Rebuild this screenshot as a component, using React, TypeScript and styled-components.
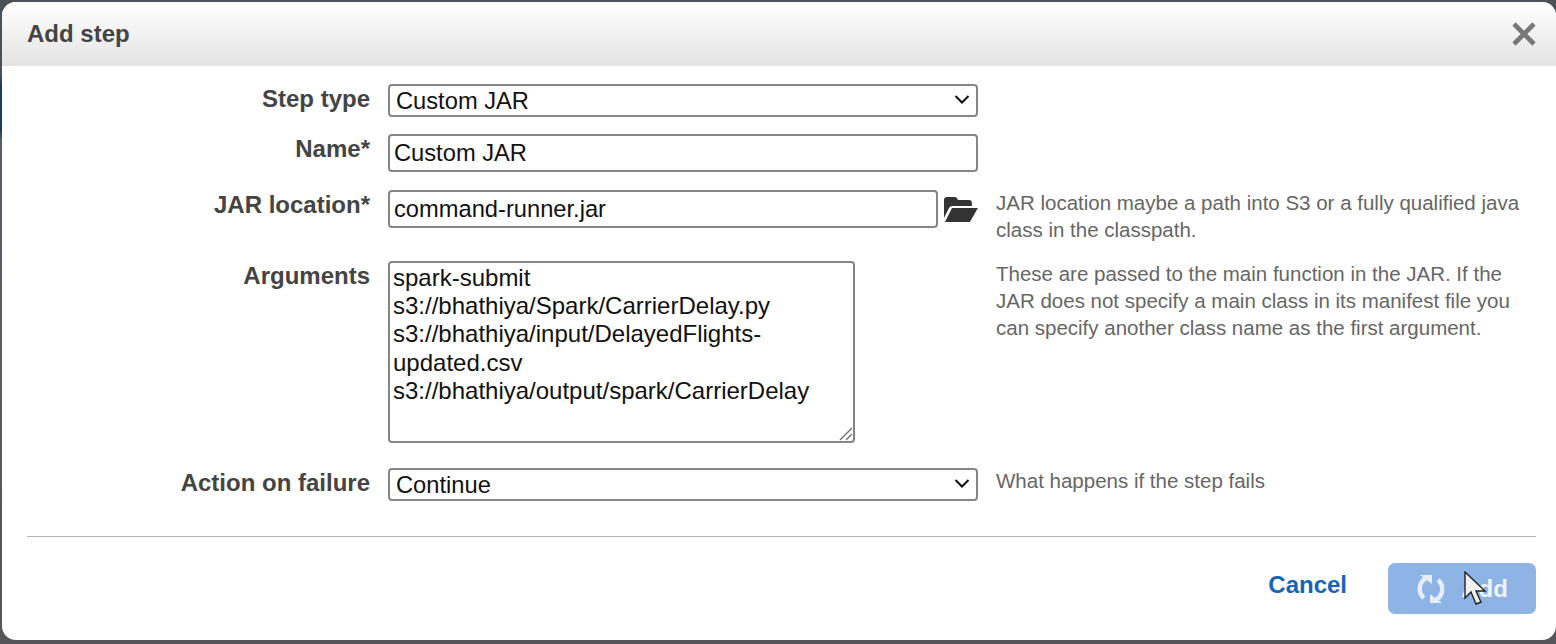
import React from "react";
import styled, { createGlobalStyle } from "styled-components";

const Global = createGlobalStyle`
  html, body { margin: 0; padding: 0; width: 1556px; height: 644px; overflow: hidden; background: #56595c; }
  body { font-family: "Liberation Sans", Arial, sans-serif; }
`;

const Backdrop = styled.div`
  width: 1556px;
  height: 644px;
  box-sizing: border-box;
  padding: 2px 0 4px 2px;
  background: linear-gradient(180deg, #4a5157 0, #4a5157 76px, #1e3a5c 84px, #1e3a5c 130px, #5a6066 140px, #565659 100%);
`;

const Modal = styled.div`
  height: 638px;
  box-sizing: border-box;
  background: #fff;
  border-radius: 14px;
  overflow: hidden;
  position: relative;
  display: flex;
  flex-direction: column;
`;

const Header = styled.header`
  height: 64px;
  flex: none;
  box-sizing: border-box;
  padding: 0 20px 0 25px;
  display: flex;
  align-items: center;
  justify-content: space-between;
  background: linear-gradient(180deg, #ffffff 0%, #e4e4e4 100%);
`;

const Title = styled.h2`
  margin: 0;
  font-size: 24px;
  line-height: 62px;
  font-weight: 700;
  color: #444;
`;

const Close = styled.svg`
  width: 24px;
  height: 24px;
  display: block;
`;

const Form = styled.div`
  padding: 18px 20px 0 0;
  display: flex;
  flex-direction: column;
`;

const Row = styled.div<{ $height: number }>`
  display: grid;
  grid-template-columns: 368px 590px 1fr;
  column-gap: 18px;
  height: ${(p) => p.$height}px;
  align-items: start;
`;

const Label = styled.label`
  text-align: right;
  font-size: 24px;
  line-height: 30px;
  font-weight: 700;
  color: #444;
`;

const SelectBox = styled.div`
  position: relative;
  width: 590px;
  height: 33px;
`;

const Select = styled.select`
  width: 100%;
  height: 100%;
  box-sizing: border-box;
  appearance: none;
  border: 2px solid #858585;
  border-radius: 4px;
  background: #fff;
  padding: 0 6px;
  font-family: inherit;
  font-size: 23.7px;
  color: #111;
  display: block;
`;

const Chevron = styled.svg`
  position: absolute;
  right: 8px;
  top: 10px;
  width: 16px;
  height: 11px;
  pointer-events: none;
`;

const Input = styled.input<{ $width: number }>`
  width: ${(p) => p.$width}px;
  height: 38px;
  box-sizing: border-box;
  border: 2px solid #858585;
  border-radius: 4px;
  background: #fff;
  padding: 0 4px;
  font-family: inherit;
  font-size: 23.7px;
  color: #111;
  display: block;
`;

const InputLine = styled.div`
  display: flex;
  align-items: center;
  gap: 6px;
`;

const AreaBox = styled.div`
  position: relative;
  width: 467px;
  height: 182px;
`;

const TextArea = styled.textarea`
  width: 100%;
  height: 100%;
  box-sizing: border-box;
  border: 2px solid #858585;
  border-radius: 4px;
  padding: 1px 3px;
  margin: 0;
  font-family: inherit;
  font-size: 24px;
  line-height: 28.2px;
  color: #111;
  display: block;
  outline: none;
  overflow: hidden;
  resize: none;
`;

const Grip = styled.svg`
  position: absolute;
  right: 2px;
  bottom: 2px;
  width: 14px;
  height: 14px;
  pointer-events: none;
`;

const Help = styled.p`
  margin: -1px 0 0;
  font-size: 20.5px;
  line-height: 27px;
  color: #666;
`;

const Divider = styled.hr`
  margin: 0 20px 0 25px;
  border: 0;
  border-top: 1.5px solid #b5b5b5;
`;

const Footer = styled.footer`
  display: flex;
  justify-content: flex-end;
  align-items: center;
  gap: 41px;
  padding: 26px 20px 0 0;
`;

const CancelLink = styled.a`
  font-size: 24px;
  font-weight: 700;
  color: #1465b8;
  margin-bottom: 7px;
`;

const AddButton = styled.div`
  width: 148px;
  height: 51px;
  box-sizing: border-box;
  border-radius: 7px;
  background: #8db4e4;
  color: #eef5fc;
  display: flex;
  align-items: center;
  justify-content: center;
  gap: 15px;
  font-size: 24px;
  font-weight: 700;
  position: relative;
`;

const Cursor = styled.svg`
  position: absolute;
  left: 76px;
  top: 8px;
  width: 24px;
  height: 36px;
`;

const Arrow = () => (
  <Chevron viewBox="0 0 16 11">
    <path d="M1.5 2 L8 8.5 L14.5 2" stroke="#111" strokeWidth="2" fill="none" />
  </Chevron>
);

export default function App() {
  return (
    <>
      <Global />
      <Backdrop>
        <Modal>
          <Header>
            <Title>Add step</Title>
            <Close viewBox="0 0 24 24">
              <path d="M2 2 L22 22 M22 2 L2 22" stroke="#777" strokeWidth="4.6" fill="none" />
            </Close>
          </Header>
          <Form>
            <Row $height={50}>
              <Label>Step type</Label>
              <SelectBox>
                <Select defaultValue="Custom JAR">
                  <option>Custom JAR</option>
                </Select>
                <Arrow />
              </SelectBox>
            </Row>
            <Row $height={56}>
              <Label>Name*</Label>
              <Input $width={590} defaultValue="Custom JAR" />
            </Row>
            <Row $height={71}>
              <Label>JAR location*</Label>
              <InputLine>
                <Input $width={552} defaultValue="command-runner.jar" />
                <svg width="34" height="25" viewBox="0 0 34 25">
                  <path
                    fill="#333"
                    d="M0 3 Q0 0 3 0 H11 Q13 0 14 3 H25 Q28 3 28 6 V9 H9 Q6 9 5 11 L0 21 Z M8 11 H34 L26 25 H1 Z"
                  />
                </svg>
              </InputLine>
              <Help>
                JAR location maybe a path into S3 or a fully qualified java class in the classpath.
              </Help>
            </Row>
            <Row $height={207}>
              <Label>Arguments</Label>
              <AreaBox>
                <TextArea
                  defaultValue={
                    "spark-submit\ns3://bhathiya/Spark/CarrierDelay.py\ns3://bhathiya/input/DelayedFlights-updated.csv\ns3://bhathiya/output/spark/CarrierDelay"
                  }
                />
                <Grip viewBox="0 0 14 14">
                  <path d="M1 13 L13 1 M7 13 L13 7" stroke="#777" strokeWidth="1.5" fill="none" />
                </Grip>
              </AreaBox>
              <Help>
                These are passed to the main function in the JAR. If the JAR does not specify a main class in its manifest file you can specify another class name as the first argument.
              </Help>
            </Row>
            <Row $height={68}>
              <Label>Action on failure</Label>
              <SelectBox>
                <Select defaultValue="Continue">
                  <option>Continue</option>
                </Select>
                <Arrow />
              </SelectBox>
              <Help>What happens if the step fails</Help>
            </Row>
          </Form>
          <Divider />
          <Footer>
            <CancelLink>Cancel</CancelLink>
            <AddButton>
              <svg width="30" height="30" viewBox="0 0 30 30" fill="none">
                <path d="M8 24 A12 12 0 0 1 11 3.8 M22 6 A12 12 0 0 1 19 26.2" stroke="#e4effa" strokeWidth="4.5" />
                <path d="M4 1 H16 V10 Z M26 29 H14 V20 Z" fill="#e4effa" />
              </svg>
              <span>Add</span>
              <Cursor viewBox="0 0 24 36">
                <path d="M1 1 V27 L7 21 L12 33 L17 31 L12 20 L21 20 Z" fill="#f0f0f0" stroke="#222" strokeWidth="1.4" />
              </Cursor>
            </AddButton>
          </Footer>
        </Modal>
      </Backdrop>
    </>
  );
}
